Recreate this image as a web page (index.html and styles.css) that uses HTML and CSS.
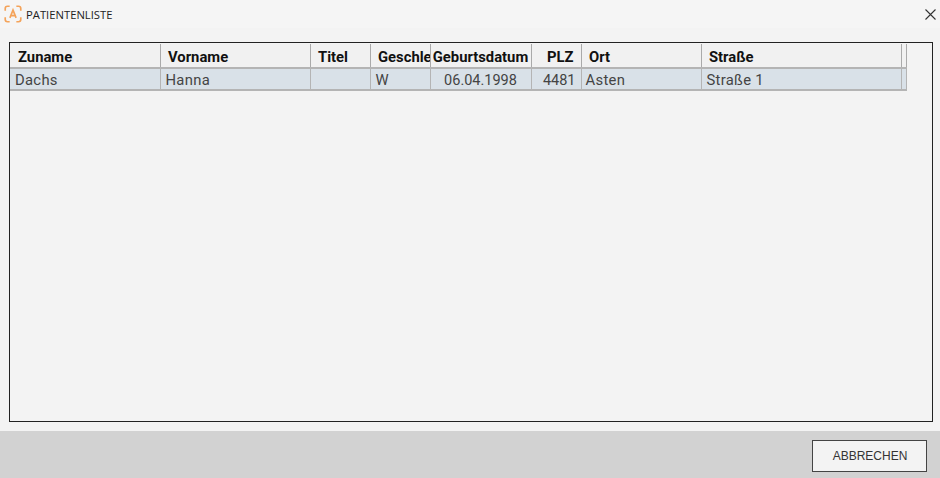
FILE: index.html
```html
<!DOCTYPE html>
<html lang="de">
<head>
  <meta charset="UTF-8">
  <meta name="viewport" content="width=device-width, initial-scale=1.0">
  <title>Patientenliste</title>
  <link rel="stylesheet" href="styles.css">
</head>

<body>
  <div class="window">
    <div class="titlebar">
      <svg class="logo" width="20" height="20" viewBox="0 0 18 18" fill="none" stroke="#f4a35a" stroke-width="1.5">
        <path d="M2 6V4a2 2 0 0 1 2-2h2M12 2h2a2 2 0 0 1 2 2v2M16 12v2a2 2 0 0 1-2 2h-2M6 16H4a2 2 0 0 1-2-2v-2"/>
        <path d="M6.2 12.5 9 5.5l2.8 7M7.2 10.4h3.6"/>
      </svg>
      <span class="title">PATIENTENLISTE</span>
      <svg class="close" width="11" height="11" viewBox="0 0 11 11" stroke="#333" stroke-width="1.1">
        <path d="M.5.5l10 10M10.5.5l-10 10"/>
      </svg>
    </div>

    <div class="content">
      <div class="listbox">
        <table class="grid">
          <colgroup>
            <col class="c-zuname">
            <col class="c-vorname">
            <col class="c-titel">
            <col class="c-geschl">
            <col class="c-geb">
            <col class="c-plz">
            <col class="c-ort">
            <col class="c-strasse">
            <col class="c-rest">
          </colgroup>
          <thead>
            <tr>
              <th class="first">Zuname</th>
              <th>Vorname</th>
              <th>Titel</th>
              <th>Geschle</th>
              <th class="center">Geburtsdatum</th>
              <th class="right">PLZ</th>
              <th>Ort</th>
              <th>Straße</th>
              <th></th>
            </tr>
          </thead>
          <tbody>
            <tr>
              <td>Dachs</td>
              <td>Hanna</td>
              <td></td>
              <td>W</td>
              <td class="center">06.04.1998</td>
              <td class="right">4481</td>
              <td class="tight">Asten</td>
              <td>Straße 1</td>
              <td></td>
            </tr>
          </tbody>
        </table>
      </div>
    </div>

    <div class="footer">
      <button class="cancel">ABBRECHEN</button>
    </div>
  </div>
</body>

</html>
```

FILE: styles.css
```css
html, body {
  margin: 0;
  padding: 0;
}

body {
  background-color: #f3f3f3;
  font-family: Roboto, "Liberation Sans", sans-serif;
  color: #333;
}

.window {
  width: 940px;
  height: 478px;
  display: flex;
  flex-direction: column;
  overflow: hidden;
}

.titlebar {
  height: 28px;
  flex: none;
  display: flex;
  align-items: center;
  padding: 0 4px 0 3px;
  box-sizing: border-box;
  background-color: #f5f5f5;
}

.logo {
  flex: none;
}

.title {
  margin-left: 3px;
  font-family: "Open Sans", "Liberation Sans", sans-serif;
  font-size: 11.25px;
  color: #222;
}

.close {
  margin-left: auto;
}

.content {
  flex: 1;
  padding: 14px 7px 9px 9px;
  min-height: 0;
  background-color: #f3f3f3;
}

.listbox {
  height: 100%;
  box-sizing: border-box;
  border: 1px solid #222;
  padding: 1px 1px 0 0;
}

.grid {
  border-collapse: collapse;
  table-layout: fixed;
  width: 896px;
  font-size: 14.8px;
}

.c-zuname { width: 150px; }
.c-vorname { width: 150px; }
.c-titel { width: 60px; }
.c-geschl { width: 60px; }
.c-geb { width: 101px; }
.c-plz { width: 50px; }
.c-ort { width: 120px; }
.c-strasse { width: 200px; }
.c-rest { width: 5px; }

th {
  height: 24px;
  padding: 2px 0 0 7.5px;
  box-sizing: border-box;
  text-align: left;
  font-weight: 700;
  color: #111;
  background-color: #f1f1f1;
  border-right: 1px solid #aaa;
  border-bottom: 2px solid #b4b4b4;
  white-space: nowrap;
  overflow: hidden;
}

td {
  height: 21px;
  padding: 2px 0 0 5px;
  box-sizing: border-box;
  color: #444;
  background-color: #d9e1e8;
  border-right: 1px solid #b4b4b4;
  border-bottom: 2px solid #b4b4b4;
  white-space: nowrap;
  overflow: hidden;
  letter-spacing: 0.3px;
}

th.first {
  padding-left: 8px;
}

td.tight {
  padding-left: 4px;
}

th:last-child, td:last-child {
  padding: 0;
}

th.center, td.center {
  text-align: center;
  padding-left: 0;
}

th.right, td.right {
  text-align: right;
  padding-left: 0;
  padding-right: 5px;
}

th.right {
  padding-right: 7px;
}

td.center, td.right {
  font-size: 14.5px;
  letter-spacing: 0;
}

.footer {
  height: 47px;
  flex: none;
  box-sizing: border-box;
  background-color: #d2d2d2;
  display: flex;
  justify-content: flex-end;
  padding: 9px 13px 6px 0;
}

.cancel {
  width: 115px;
  height: 32px;
  background-color: #f3f3f3;
  border: 1px solid #444;
  font-family: "Liberation Sans", sans-serif;
  font-size: 12px;
  color: #333;
  padding: 0 0 0 1px;
}
```
